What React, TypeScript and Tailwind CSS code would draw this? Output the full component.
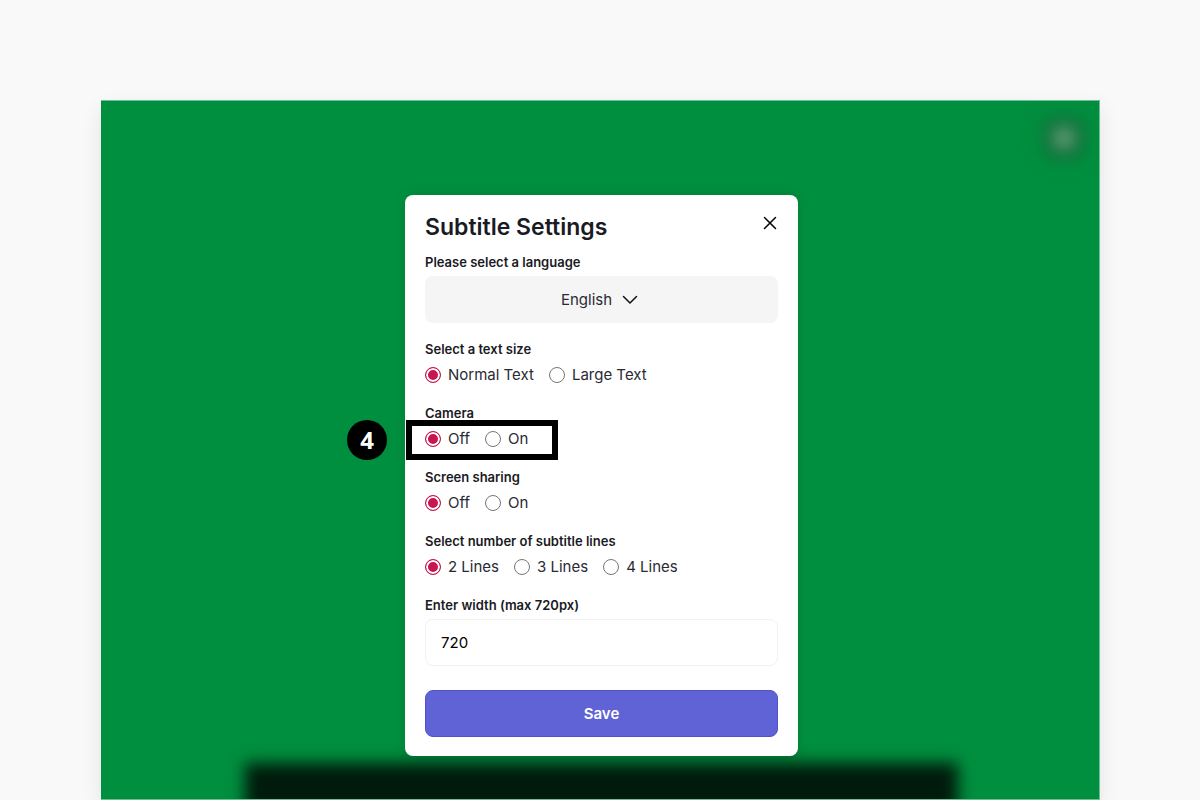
import { useState } from "react";

type RadioRowProps = {
  name: string;
  label: string;
  options: string[];
  highlight?: number;
};

const labelClass = "block h-5 text-[13px] leading-5 font-semibold text-[#1a1a24]";

const RadioRow = ({ name, label, options, highlight }: RadioRowProps) => {
  const [value, setValue] = useState(options[0]);

  return (
    <fieldset className="mt-4">
      <legend className={labelClass}>{label}</legend>
      <div className="relative mt-1 flex h-6 items-center gap-[15px]">
        {options.map((option) => (
          <label key={option} className="flex items-center gap-[7px] text-[15px] leading-6 text-[#2a2a34]">
            <input
              type="radio"
              name={name}
              value={option}
              checked={value === option}
              onChange={() => setValue(option)}
              className="m-0 size-4 appearance-none rounded-full border border-[#767676] bg-white checked:border-[#c8164f] checked:bg-[#c8164f] checked:shadow-[inset_0_0_0_2px_#fff]"
            />
            {option}
          </label>
        ))}

        {/* Step marker */}
        {highlight && (
          <>
            <div className="pointer-events-none absolute -top-[7px] -left-[19px] h-10 w-[152px] border-6 border-black" />
            <div className="absolute -top-[7px] -left-[78px] flex size-10 items-center justify-center rounded-full bg-black font-['Open_Sans','Noto_Sans',sans-serif] text-[24px] leading-8 font-bold text-white">
              {highlight}
            </div>
          </>
        )}
      </div>
    </fieldset>
  );
};

const SettingsDialog = () => {
  const [width, setWidth] = useState("720");

  return (
    <form
      role="dialog"
      aria-labelledby="dialog-title"
      onSubmit={(e) => e.preventDefault()}
      className="relative z-10 w-full max-w-[393px] rounded-lg bg-white px-5 pt-4 pb-[19px] shadow-[0_0_12px_rgba(0,0,0,0.12)]"
    >
      {/* Header */}
      <div className="mb-[9px] flex items-start justify-between">
        <h1 id="dialog-title" className="text-[23px] leading-8 font-semibold text-[#1a1a24]">
          Subtitle Settings
        </h1>
        <button type="button" aria-label="Close" className="mt-1 flex size-4 items-center justify-center">
          <svg width="16" height="16" viewBox="0 0 16 16" fill="none" stroke="#000" strokeWidth="1.5" strokeLinecap="round">
            <path d="M2.5 2.5l11 11M13.5 2.5l-11 11" />
          </svg>
        </button>
      </div>

      {/* Language */}
      <label htmlFor="language" className={labelClass}>
        Please select a language
      </label>
      <div className="mt-1 flex h-[47px] items-center justify-center gap-[10px] rounded-lg bg-[#f5f5f5] pr-1">
        <select
          id="language"
          className="appearance-none bg-transparent text-[15px] leading-6 text-[#2a2a34] [field-sizing:content]"
        >
          <option>English</option>
        </select>
        <svg width="16" height="10" viewBox="0 0 16 10" fill="none" stroke="#111" strokeWidth="1.5" strokeLinecap="round" strokeLinejoin="round">
          <path d="M1.5 1.5L8 8l6.500-6.500" />
        </svg>
      </div>

      <RadioRow name="size" label="Select a text size" options={["Normal Text", "Large Text"]} />
      <RadioRow name="camera" label="Camera" options={["Off", "On"]} highlight={4} />
      <RadioRow name="sharing" label="Screen sharing" options={["Off", "On"]} />
      <RadioRow name="lines" label="Select number of subtitle lines" options={["2 Lines", "3 Lines", "4 Lines"]} />

      {/* Width */}
      <label htmlFor="width" className={`mt-4 ${labelClass}`}>
        Enter width (max 720px)
      </label>
      <input
        id="width"
        type="text"
        value={width}
        onChange={(e) => setWidth(e.target.value)}
        className="mt-1 block h-[47px] w-full rounded-lg border border-[#f2f2f2] px-[15px] text-[15px] leading-6 text-black"
      />

      <button
        type="submit"
        className="mt-6 block h-[47px] w-full rounded-lg border border-[#4f52cc] bg-[#5f63d6] text-[15px] leading-6 font-semibold text-white"
      >
        Save
      </button>
    </form>
  );
};

export default function App() {
  return (
    <div className="flex min-h-screen flex-col bg-[#f9f9f9] pt-[100px] pr-[100px] pl-[101px] font-['Inter',sans-serif]">
      <main className="relative flex flex-1 items-start justify-center overflow-hidden border-t border-r border-b border-[#6fbd92] bg-[#008f3f] pt-[94px] pb-[43px] pl-[3px] shadow-[0_8px_20px_rgba(0,0,0,0.09)]">
        {/* Blurred control in the corner */}
        <div className="absolute top-[17px] right-[15px] size-10 rounded-lg bg-[#146e3a] blur-[9px]" />
        <div className="absolute top-[26px] right-[24px] size-[22px] rounded-full bg-[#62a07c] blur-[8px]" />

        {/* Blurred subtitle area */}
        <div className="absolute right-[141px] -bottom-10 left-[144px] h-[76px] bg-[#001a0c] blur-[8px]" />

        <SettingsDialog />
      </main>
    </div>
  );
}
